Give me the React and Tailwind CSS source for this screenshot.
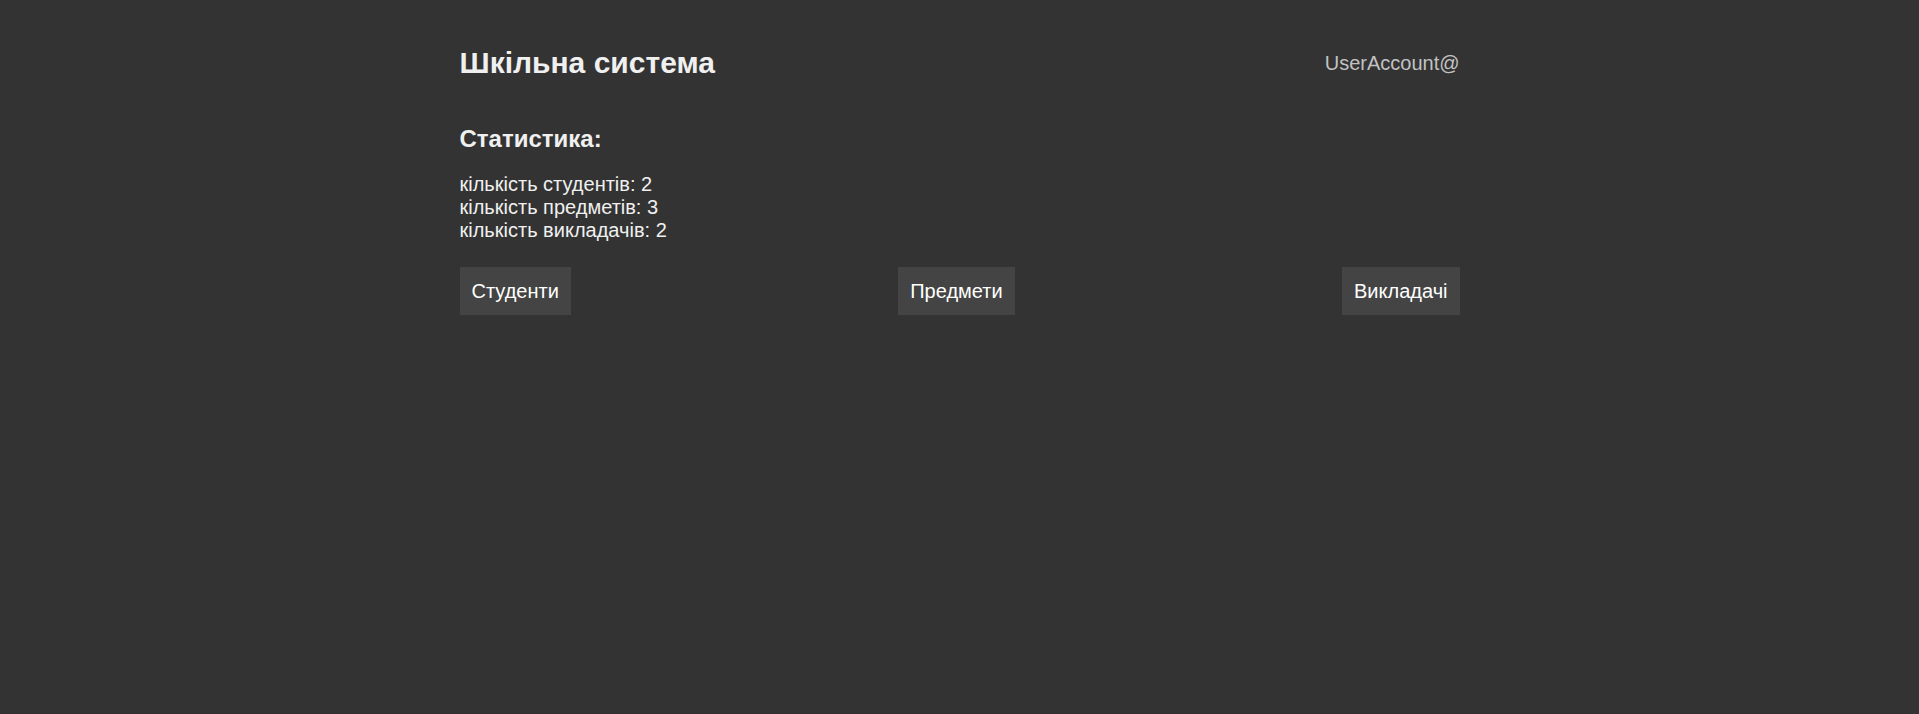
import React from 'react';

const stats = [
  { label: 'кількість студентів', value: 2 },
  { label: 'кількість предметів', value: 3 },
  { label: 'кількість викладачів', value: 2 },
];

const links = ['Студенти', 'Предмети', 'Викладачі'];

export default function App() {
  return (
    <div className="min-h-screen bg-[#333333] text-[#f0f0f0] font-['Liberation_Sans',Arial,sans-serif]">
      <div className="mx-auto w-[1000px] pt-[45px]">
        {/* Header */}
        <header className="flex items-center justify-between">
          <h1 className="text-[30px] leading-[36px] font-bold">Шкільна система</h1>
          <span className="text-[20px] leading-[28px] text-[#c2c2c2]">UserAccount@</span>
        </header>

        {/* Stats */}
        <section className="mt-[42px]">
          <h2 className="text-[24px] leading-[32px] font-bold">Статистика:</h2>
          <div className="mt-[18px] text-[20px] leading-[23px]">
            {stats.map((s) => (
              <div key={s.label}>
                {s.label}: {s.value}
              </div>
            ))}
          </div>
        </section>

        {/* Nav buttons */}
        <nav className="mt-[25px] flex justify-between">
          {links.map((l) => (
            <button
              key={l}
              className="bg-[#444444] px-3 py-3 text-[20px] leading-[24px] text-white"
            >
              {l}
            </button>
          ))}
        </nav>
      </div>
    </div>
  );
}
